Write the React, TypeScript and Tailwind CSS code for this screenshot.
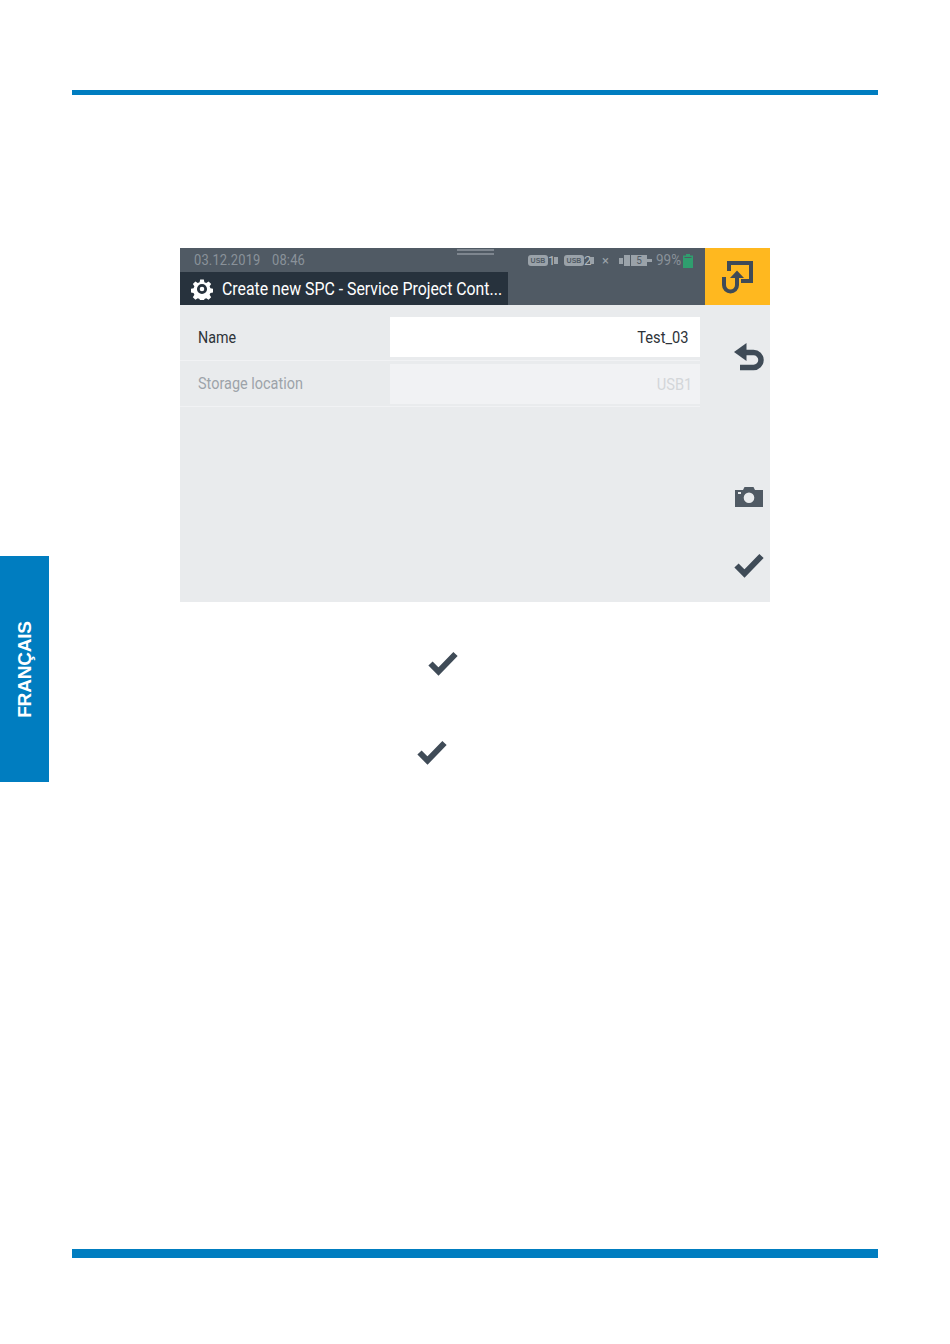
const Check = ({ className }: { className: string }) => (
  <svg viewBox="0 0 32 26" className={className}>
    <path d="M3.5 13.5 L11.5 21.5 L28.5 4" fill="none" stroke="#3f4b57" strokeWidth="6" strokeLinecap="butt" />
  </svg>
);

const UsbStick = ({ label, n }: { label: string; n: string }) => (
  <div className="flex items-center h-[12px] w-[30px]">
    <div className="w-[20px] h-[11px] rounded-[3px] bg-[#9aa2a9] flex items-center justify-center text-[7px] leading-none font-bold text-[#505a64] font-['Liberation_Sans',sans-serif]">
      {label}
    </div>
    <span className="w-[5px] text-center text-[13px] leading-none text-[#b4bac0] font-['Roboto',sans-serif]">{n}</span>
    <div className="ml-[1px] w-[4px] h-[7px] bg-[#9aa2a9]" />
  </div>
);

export default function App() {
  return (
    <div className="w-[950px] h-[1344px] bg-white flex flex-col overflow-hidden font-['Roboto',sans-serif]">
      <div className="mt-[90px] mx-[72px] h-[5px] shrink-0 bg-[#007dc0]" />
      <div className="flex flex-1">
        <div className="w-[49px] shrink-0 pt-[461px]">
          <div className="w-[49px] h-[226px] bg-[#007dc0] flex items-center justify-center">
            <span className="block -rotate-90 whitespace-nowrap text-white font-bold text-[19px] leading-none tracking-[-0.2px] font-['Liberation_Sans',sans-serif]">
              FRANÇAIS
            </span>
          </div>
        </div>
        <div className="flex-1 pl-[131px] pt-[153px]">
          <div className="w-[590px] h-[354px] bg-[#e9ebed] flex flex-col">
            <div className="h-[57px] bg-[#505a64] flex shrink-0">
              <div className="w-[525px] flex flex-col">
                <div className="h-[24px] flex relative pl-[14px] pt-[3px]">
                  <span className="text-[15px] leading-[18px] text-[#8a929a] whitespace-nowrap origin-left scale-x-[0.86] tracking-[0.2px]">
                    03.12.2019
                  </span>
                  <span className="absolute left-[92px] top-[3px] text-[15px] leading-[18px] text-[#8a929a] whitespace-nowrap origin-left scale-x-[0.86] tracking-[0.2px]">
                    08:46
                  </span>
                  <div className="absolute left-[277px] top-[1px] w-[37px] h-[6px] border-y-2 border-[#8a929a] opacity-80" />
                  <div className="absolute left-[348px] top-[5px] flex items-center">
                    <UsbStick label="USB" n="1" />
                    <div className="w-[6px]" />
                    <UsbStick label="USB" n="2" />
                    <span className="ml-[8px] w-[17px] text-[13px] leading-none text-[#9aa2a9]">×</span>
                    <div className="flex items-center w-[37px]">
                      <div className="w-[4px] h-[6px] bg-[#9aa2a9]" />
                      <div className="w-[6px] h-[11px] bg-[#9aa2a9] ml-[1px]" />
                      <div className="ml-[1px] w-[16px] h-[11px] bg-[#9aa2a9] text-[10px] leading-[11px] text-center text-[#505a64]">5</div>
                      <div className="w-[5px] h-[3px] bg-[#9aa2a9]" />
                    </div>
                    <span className="text-[15px] leading-none text-[#8a929a] whitespace-nowrap origin-left scale-x-[0.9] w-[27px]">99%</span>
                    <svg viewBox="0 0 10 14" className="w-[10px] h-[14px]">
                      <path d="M3 0h4v1.5h3V14H0V1.5h3z" fill="#2f9e6e" />
                      <path d="M1.5 3h7v1H1.5z" fill="#505a64" />
                    </svg>
                  </div>
                </div>
                <div className="h-[33px] w-[328px] bg-[#27323d] flex items-center overflow-hidden">
                  <svg viewBox="0 0 24 24" className="ml-[11px] w-[22px] h-[22px] shrink-0">
                    <path
                      fillRule="evenodd"
                      fill="#fff"
                      d="M10 1.5h4l.6 3 2 .9 2.6-1.7 2.8 2.8-1.7 2.6.9 2 3 .6v4l-3 .6-.9 2 1.7 2.6-2.8 2.8-2.6-1.7-2 .9-.6 3h-4l-.6-3-2-.9-2.6 1.7-2.8-2.8 1.7-2.6-.9-2-3-.6v-4l3-.6.9-2-1.7-2.6 2.8-2.8 2.6 1.7 2-.9zM12 6.5a5.5 5.5 0 1 0 0 11 5.5 5.5 0 0 0 0-11zM12 9.5a2.5 2.5 0 1 1 0 5 2.5 2.5 0 0 1 0-5z"
                    />
                  </svg>
                  <span className="ml-[9px] text-[18px] leading-none text-white whitespace-nowrap origin-left scale-x-[0.88]">
                    Create new SPC - Service Project Cont...
                  </span>
                </div>
              </div>
              <div className="w-[65px] bg-[#ffb81f] flex items-center justify-center">
                <svg viewBox="0 0 32 34" className="w-[32px] h-[34px] -translate-x-[1px]">
                  <path d="M8 11V3h22v18H20" fill="none" stroke="#3f4b57" strokeWidth="4" />
                  <path d="M3 17v8a6.5 6.5 0 0 0 13 0v-9" fill="none" stroke="#3f4b57" strokeWidth="4" />
                  <path d="M9 18 16 10.5 23 18z" fill="#3f4b57" />
                </svg>
              </div>
            </div>
            <div className="flex flex-1">
              <div className="w-[520px]">
                <div className="h-[56px] pt-[12px] flex border-b border-[#f1f2f4]">
                  <div className="w-[210px] pl-[18px] pt-[10px]">
                    <div className="text-[17px] leading-[20px] text-[#2d3339] whitespace-nowrap origin-left scale-x-[0.84]">Name</div>
                  </div>
                  <div className="w-[310px] h-[40px] bg-white flex items-center justify-end pr-[12px]">
                    <span className="text-[17px] leading-none text-[#2d3339] origin-right scale-x-[0.86]">Test_03</span>
                  </div>
                </div>
                <div className="h-[46px] pt-[3px] flex border-b border-[#f1f2f4]">
                  <div className="w-[210px] pl-[18px] pt-[9px]">
                    <div className="text-[17px] leading-[20px] text-[#9da3a9] whitespace-nowrap origin-left scale-x-[0.85]">Storage location</div>
                  </div>
                  <div className="w-[310px] h-[40px] bg-[#f1f2f4] flex items-center justify-end pr-[8px]">
                    <span className="text-[17px] leading-none text-[#d3d6d9] origin-right scale-x-[0.86]">USB1</span>
                  </div>
                </div>
              </div>
              <div className="flex-1 flex flex-col items-center pl-[28px]">
                <svg viewBox="0 0 30 31" className="mt-[38px] w-[30px] h-[31px]">
                  <path d="M11 9.5h8.5a7.5 7.5 0 0 1 0 15H6" fill="none" stroke="#3f4b57" strokeWidth="5.5" />
                  <path d="M12.5 0v18L0 9z" fill="#3f4b57" />
                </svg>
                <svg viewBox="0 0 28 20" className="mt-[113px] w-[28px] h-[20px]">
                  <path
                    fillRule="evenodd"
                    fill="#505a64"
                    d="M0 3h8l1.5-3h9L20 3h8v17H0zM14 5.5a5.3 5.3 0 1 0 0 10.6 5.3 5.3 0 0 0 0-10.6zM3 5h3v2H3z"
                  />
                </svg>
                <Check className="mt-[45px] w-[32px] h-[26px]" />
              </div>
            </div>
          </div>
          <Check className="ml-[247px] mt-[48px] w-[32px] h-[26px]" />
          <Check className="ml-[236px] mt-[63px] w-[32px] h-[26px]" />
        </div>
      </div>
      <div className="mb-[86px] mx-[72px] h-[9px] shrink-0 bg-[#007dc0]" />
    </div>
  );
}
